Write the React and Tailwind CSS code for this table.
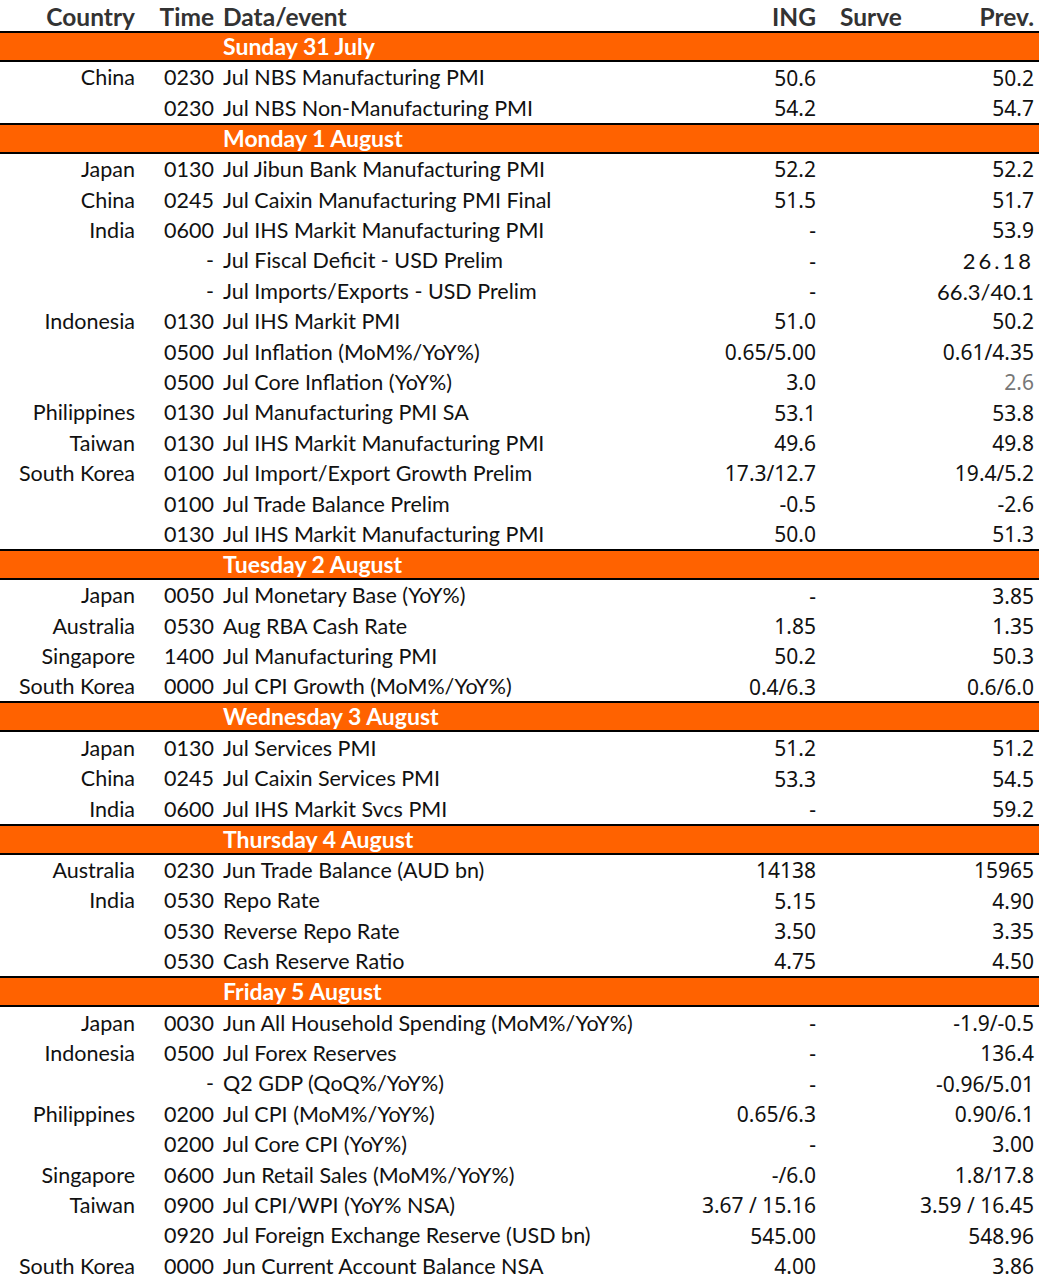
import React from "react";

const sections = [
  {
    day: "Sunday 31 July",
    rows: [
      ["China", "0230", "Jul NBS Manufacturing PMI", "50.6", "50.2"],
      ["", "0230", "Jul NBS Non-Manufacturing PMI", "54.2", "54.7"],
    ],
  },
  {
    day: "Monday 1 August",
    rows: [
      ["Japan", "0130", "Jul Jibun Bank Manufacturing PMI", "52.2", "52.2"],
      ["China", "0245", "Jul Caixin Manufacturing PMI Final", "51.5", "51.7"],
      ["India", "0600", "Jul IHS Markit Manufacturing PMI", "-", "53.9"],
      ["", "-", "Jul Fiscal Deficit - USD Prelim", "-", "26.18", "wide"],
      ["", "-", "Jul Imports/Exports - USD Prelim", "-", "66.3/40.1", "text"],
      ["Indonesia", "0130", "Jul IHS Markit PMI", "51.0", "50.2"],
      ["", "0500", "Jul Inflation (MoM%/YoY%)", "0.65/5.00", "0.61/4.35"],
      ["", "0500", "Jul Core Inflation (YoY%)", "3.0", "2.6", "gray"],
      ["Philippines", "0130", "Jul Manufacturing PMI SA", "53.1", "53.8"],
      ["Taiwan", "0130", "Jul IHS Markit Manufacturing PMI", "49.6", "49.8"],
      ["South Korea", "0100", "Jul Import/Export Growth Prelim", "17.3/12.7", "19.4/5.2"],
      ["", "0100", "Jul Trade Balance Prelim", "-0.5", "-2.6"],
      ["", "0130", "Jul IHS Markit Manufacturing PMI", "50.0", "51.3"],
    ],
  },
  {
    day: "Tuesday 2 August",
    rows: [
      ["Japan", "0050", "Jul Monetary Base (YoY%)", "-", "3.85"],
      ["Australia", "0530", "Aug RBA Cash Rate", "1.85", "1.35"],
      ["Singapore", "1400", "Jul Manufacturing PMI", "50.2", "50.3"],
      ["South Korea", "0000", "Jul CPI Growth (MoM%/YoY%)", "0.4/6.3", "0.6/6.0"],
    ],
  },
  {
    day: "Wednesday 3 August",
    rows: [
      ["Japan", "0130", "Jul Services PMI", "51.2", "51.2"],
      ["China", "0245", "Jul Caixin Services PMI", "53.3", "54.5"],
      ["India", "0600", "Jul IHS Markit Svcs PMI", "-", "59.2"],
    ],
  },
  {
    day: "Thursday 4 August",
    rows: [
      ["Australia", "0230", "Jun Trade Balance (AUD bn)", "14138", "15965"],
      ["India", "0530", "Repo Rate", "5.15", "4.90"],
      ["", "0530", "Reverse Repo Rate", "3.50", "3.35"],
      ["", "0530", "Cash Reserve Ratio", "4.75", "4.50"],
    ],
  },
  {
    day: "Friday 5 August",
    rows: [
      ["Japan", "0030", "Jun All Household Spending (MoM%/YoY%)", "-", "-1.9/-0.5"],
      ["Indonesia", "0500", "Jul Forex Reserves", "-", "136.4"],
      ["", "-", "Q2 GDP (QoQ%/YoY%)", "-", "-0.96/5.01"],
      ["Philippines", "0200", "Jul CPI (MoM%/YoY%)", "0.65/6.3", "0.90/6.1"],
      ["", "0200", "Jul Core CPI (YoY%)", "-", "3.00"],
      ["Singapore", "0600", "Jun Retail Sales (MoM%/YoY%)", "-/6.0", "1.8/17.8"],
      ["Taiwan", "0900", "Jul CPI/WPI (YoY% NSA)", "3.67 / 15.16", "3.59 / 16.45"],
      ["", "0920", "Jul Foreign Exchange Reserve (USD bn)", "545.00", "548.96"],
      ["South Korea", "0000", "Jun Current Account Balance NSA", "4.00", "3.86"],
    ],
  },
];

const textFont = "font-['Lato','Noto_Sans',sans-serif]";
const numFont = "font-['Noto_Sans','Open_Sans',sans-serif]";

function prevClass(kind) {
  if (kind === "gray") return `${numFont} text-[21px] text-[#777]`;
  if (kind === "text") return `${textFont} text-[22px]`;
  if (kind === "wide") return `${textFont} text-[22px] tracking-[3px] -mr-[3px]`;
  return `${numFont} text-[21px]`;
}

function Row({ r }) {
  const [country, time, event, ing, prev, kind] = r;
  return (
    <div className="flex h-[30.4px] items-center pt-[2px] text-[21.5px] leading-none text-[#111]">
      <div className="w-[135px] shrink-0 whitespace-nowrap text-right">{country}</div>
      <div className="w-[79px] shrink-0 text-right">{time}</div>
      <div className="ml-[9px] w-[478px] shrink-0 whitespace-nowrap">{event}</div>
      <div className={`w-[115px] shrink-0 whitespace-nowrap text-right text-[21px] ${numFont}`}>{ing}</div>
      <div className="w-[100px] shrink-0" />
      <div className={`w-[118px] shrink-0 whitespace-nowrap text-right ${prevClass(kind)}`}>{prev}</div>
    </div>
  );
}

function Band({ day }) {
  return (
    <div className="flex h-[31px] items-center border-y-2 border-black bg-[#ff6200] text-[23px] font-bold leading-none text-white">
      <div className="w-[223px] shrink-0" />
      <div>{day}</div>
    </div>
  );
}

export default function App() {
  return (
    <div className={`w-[1039px] h-[1282px] overflow-hidden bg-white ${textFont}`}>
      <div className="flex h-[31px] items-center pt-[4px] text-[24.5px] font-bold leading-none text-[#333]">
        <div className="w-[135px] shrink-0 text-right">Country</div>
        <div className="w-[79px] shrink-0 text-right">Time</div>
        <div className="ml-[9px] w-[478px] shrink-0">Data/event</div>
        <div className="w-[115px] shrink-0 text-right">ING</div>
        <div className="w-[100px] shrink-0 pl-[24px]">Surve</div>
        <div className="w-[118px] shrink-0 text-right">Prev.</div>
      </div>
      {sections.map((s) => (
        <React.Fragment key={s.day}>
          <Band day={s.day} />
          {s.rows.map((r, i) => (
            <Row key={i} r={r} />
          ))}
        </React.Fragment>
      ))}
    </div>
  );
}
